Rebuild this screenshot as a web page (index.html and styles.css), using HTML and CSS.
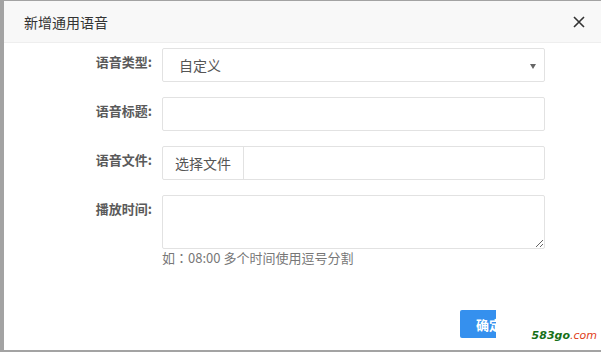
FILE: index.html
```html
<!DOCTYPE html>
<html lang="zh-CN">
<head>
<meta charset="utf-8">
<title>新增通用语音</title>
<link rel="stylesheet" href="styles.css">
</head>
<body>
<div class="dialog">
  <div class="dialog-header">
    <span class="dialog-title">新增通用语音</span>
    <span class="close" aria-label="关闭">
      <svg width="12" height="12" viewBox="0 0 12 12"><path d="M1 1L11 11M11 1L1 11" stroke="#333" stroke-width="1.6" fill="none"/></svg>
    </span>
  </div>
  <div class="dialog-body">
    <div class="form-row">
      <label class="form-label">语音类型:</label>
      <div class="control select">自定义</div>
    </div>
    <div class="form-row">
      <label class="form-label">语音标题:</label>
      <div class="control"></div>
    </div>
    <div class="form-row">
      <label class="form-label">语音文件:</label>
      <div class="control file">
        <span class="file-btn">选择文件</span>
        <span class="file-name"></span>
      </div>
    </div>
    <div class="form-row tall">
      <label class="form-label">播放时间:</label>
      <div class="field">
        <textarea class="control textarea"></textarea>
        <div class="help">如<span class="colon">：</span>08:00 多个时间使用逗号分割</div>
      </div>
    </div>
  </div>
  <div class="dialog-footer">
    <button class="btn primary">确定</button>
  </div>
  <div class="watermark"><span class="wm-num">583go</span><span class="wm-dom">.com</span></div>
</div>
</body>
</html>
```
FILE: styles.css
```css
html, body {
  margin: 0;
  padding: 0;
}
body {
  background: #a3a3a3;
  font-family: "Noto Sans CJK SC", "Noto Sans", sans-serif;
  width: 601px;
  height: 352px;
  overflow: hidden;
}
.dialog {
  position: relative;
  margin: 1px 0 0 4px;
  width: 597px;
  height: 349px;
  background: #fff;
  display: flex;
  flex-direction: column;
}
.dialog-header {
  height: 41px;
  background: #f8f8f8;
  border-bottom: 1px solid #eeeeee;
  display: flex;
  align-items: center;
  justify-content: space-between;
  padding: 0 16px 0 20px;
}
.dialog-title {
  font-size: 14px;
  color: #333;
}
.close {
  display: flex;
  width: 12px;
  height: 12px;
}
.dialog-body {
  padding-top: 5px;
}
.form-row {
  display: flex;
  align-items: flex-start;
  margin-bottom: 15px;
}
.form-row.tall {
  margin-bottom: 0;
}
.form-label {
  width: 148px;
  margin-right: 10px;
  text-align: right;
  font-size: 13px;
  font-weight: bold;
  color: #5a5a5a;
  line-height: 18px;
  padding-top: 5px;
  box-sizing: border-box;
}
.control {
  box-sizing: border-box;
  width: 383px;
  height: 34px;
  border: 1px solid #e2e2e2;
  border-radius: 2px;
  background: #fff;
  font-family: inherit;
  font-size: 14px;
  color: #555;
}
.select {
  position: relative;
  padding-left: 16px;
  line-height: 32px;
}
.select::after {
  content: "";
  position: absolute;
  right: 8px;
  top: 15px;
  border-left: 3px solid transparent;
  border-right: 3px solid transparent;
  border-top: 5px solid #666;
}
.file {
  display: flex;
}
.file-btn {
  width: 81px;
  box-sizing: border-box;
  border-right: 1px solid #e2e2e2;
  text-align: center;
  line-height: 32px;
}
.field {
  display: flex;
  flex-direction: column;
}
.textarea {
  display: block;
  height: 54px;
  margin: 0;
  resize: vertical;
  outline: none;
}
.help {
  font-size: 13px;
  color: #777;
  line-height: 18px;
  margin-top: 0;
}
.colon {
  display: inline-block;
  width: 13px;
  text-align: center;
  font-family: "Noto Sans CJK JP", sans-serif;
}
.dialog-footer {
  margin-top: auto;
  display: flex;
  justify-content: flex-end;
  padding: 0 83px 12px 20px;
}
.btn {
  height: 28px;
  padding: 0 16px;
  border: 0;
  border-radius: 2px;
  font-family: inherit;
  font-size: 13px;
  font-weight: bold;
  background: #f0f0f0;
  color: #333;
}
.btn.primary {
  background: #3590ee;
  color: #fff;
}
.watermark {
  position: absolute;
  right: 0;
  bottom: 0;
  width: 105px;
  height: 45px;
  background: #fff;
  box-sizing: border-box;
  padding: 24px 4px 0 0;
  text-align: right;
  font-family: "DejaVu Sans", sans-serif;
  font-size: 11px;
  font-weight: bold;
  font-style: italic;
  line-height: 14px;
}
.wm-num {
  color: #177017;
}
.wm-dom {
  color: #e0401a;
  font-weight: normal;
}
```
